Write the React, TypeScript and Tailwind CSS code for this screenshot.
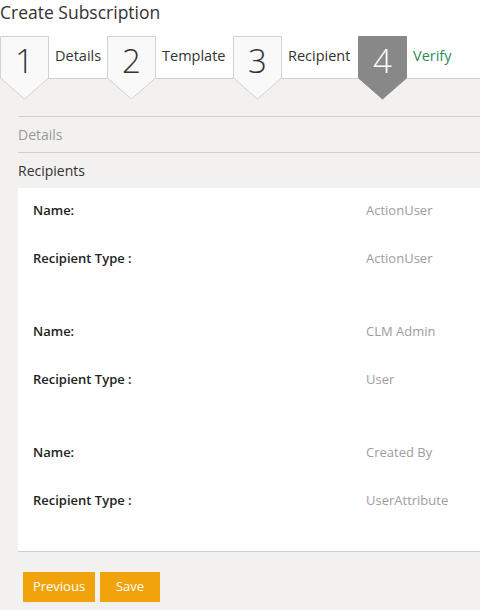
import React from "react";

const steps = [
  { n: "1", label: "Details", w: "w-[58px]" },
  { n: "2", label: "Template", w: "w-[77px]" },
  { n: "3", label: "Recipient", w: "w-[76px]" },
  { n: "4", label: "Verify", w: "w-[60px]", active: true },
];

const recipients = [
  { name: "ActionUser", type: "ActionUser" },
  { name: "CLM Admin", type: "User" },
  { name: "Created By", type: "UserAttribute" },
];

function StepBox({ n, active }: { n: string; active?: boolean }) {
  return (
    <div className="relative w-[49px] h-[64px] shrink-0">
      <svg width="49" height="64" viewBox="0 0 49 64" className="absolute inset-0">
        <polygon
          points="0.5,0.5 48.5,0.5 48.5,42 24.5,63 0.5,42"
          fill={active ? "#888888" : "#f9f9f9"}
          stroke={active ? "#888888" : "#d2d2d2"}
          strokeWidth="1"
        />
      </svg>
      <div
        className={`relative flex h-[45px] items-center justify-center pt-[3px] text-[33px] font-light leading-none ${
          active ? "text-white" : "text-[#333]"
        }`}
      >
        {n}
      </div>
    </div>
  );
}

export default function App() {
  return (
    <div
      className="min-h-[610px] w-[480px] bg-[#f2f1ef] text-[#333]"
      style={{ fontFamily: '"Open Sans", "Noto Sans", sans-serif' }}
    >
      <div className="relative z-10 bg-white">
        <div className="h-[36px] text-[17.5px] leading-[24px] text-[#333]">Create Subscription</div>
        <div className="flex h-[43px] items-start border-b border-[#d0d0d0]">
          {steps.map((s) => (
            <div key={s.n} className="flex items-start">
              <StepBox n={s.n} active={s.active} />
              <div
                className={`${s.w} pl-[6px] pt-[10px] text-[14.5px] leading-[20px] whitespace-nowrap ${
                  s.active ? "text-[#2e8a5b]" : "text-[#333]"
                }`}
              >
                {s.label}
              </div>
            </div>
          ))}
        </div>
      </div>

      <div className="pt-[37px] pl-[18px]">
        <div className="border-t border-[#cfcfcf]">
          <div className="flex h-[35px] items-center text-[14px] text-[#999]">Details</div>
        </div>
        <div className="border-t border-[#cfcfcf]">
          <div className="flex h-[35px] items-center text-[14px] text-[#333]">Recipients</div>
        </div>

        <div className="border-b border-[#cdcdcd] bg-white">
          {recipients.map((r) => (
            <div key={r.name} className="flex h-[121px] flex-col gap-[24px] pt-[11px] text-[13px]">
              <div className="flex h-[24px] items-center">
                <div className="w-[348px] pl-[15px] font-semibold text-[#222]">Name:</div>
                <div className="text-[#9d9d9d]">{r.name}</div>
              </div>
              <div className="flex h-[24px] items-center">
                <div className="w-[348px] pl-[15px] font-semibold text-[#222]">Recipient Type :</div>
                <div className="text-[#9d9d9d]">{r.type}</div>
              </div>
            </div>
          ))}
        </div>
      </div>

      <div className="flex gap-[5px] pl-[23px] pt-[20px]">
        <button className="h-[30px] w-[72px] bg-[#f0a30a] text-[13px] text-white">Previous</button>
        <button className="h-[30px] w-[60px] bg-[#f0a30a] text-[13px] text-white">Save</button>
      </div>
    </div>
  );
}
